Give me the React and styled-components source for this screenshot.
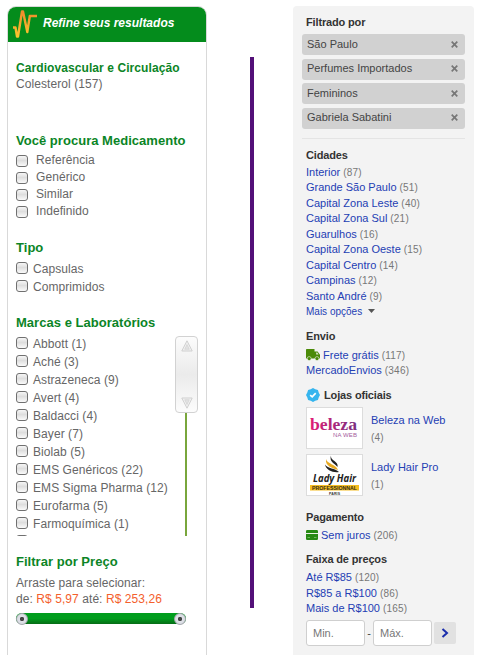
import React from "react";
import styled, { createGlobalStyle } from "styled-components";

const GlobalStyle = createGlobalStyle`
  * { box-sizing: border-box; }
  html, body { margin: 0; height: 655px; overflow: hidden; background: #fff; }
  body { font-family: "Liberation Sans", Arial, sans-serif; font-size: 12px; color: #666; }
  h2, h3, ul, p { margin: 0; padding: 0; list-style: none; }
  svg { display: block; flex: none; }
`;

const Page = styled.main`
  display: grid;
  grid-template-columns: 200px 4px 182px;
  column-gap: 43px;
  width: 478px;
  height: 655px;
  padding: 6px 0 0 7px;
  overflow: hidden;
`;

const RefinePanel = styled.aside`
  height: 670px;
  border: 1px solid #d9d9d9;
  border-radius: 9px 9px 0 0;
  overflow: hidden;
  letter-spacing: 0.07px;
`;

const RefineHeader = styled.h2`
  display: flex;
  align-items: flex-start;
  height: 35px;
  padding: 2px 0 0 4px;
  gap: 5px;
  background: #048c1c;
  color: #fff;
  font: italic bold 12px/28px "Liberation Sans", Arial, sans-serif;
  letter-spacing: 0;
`;

const RefineBody = styled.div`
  padding: 18px 8px 0;
`;

const GreenTitle = styled.h3`
  margin-top: ${(p) => p.$top || 0}px;
  height: ${(p) => (p.$small ? 16 : 17)}px;
  color: #0b8526;
  font-size: ${(p) => (p.$small ? 12 : 13)}px;
  line-height: ${(p) => (p.$small ? 16 : 17)}px;
  letter-spacing: ${(p) => (p.$small ? 0.08 : 0.03)}px;
  white-space: nowrap;
`;

const Line = styled.p`
  height: 16px;
  line-height: 16px;
  white-space: nowrap;
`;

const PriceSummary = styled.div`
  margin-top: 5px;
`;

const Price = styled.span`
  color: #f4602c;
`;

const OptionList = styled.ul`
  margin-top: ${(p) => p.$top}px;
`;

const Option = styled.li`
  display: flex;
  align-items: flex-start;
  gap: ${(p) => (p.$wide ? 8 : 5)}px;
  height: ${(p) => (p.$wide ? 17 : 18)}px;
  line-height: ${(p) => (p.$wide ? 17 : 18)}px;
  white-space: nowrap;
`;

const Box = styled.span`
  flex: none;
  width: 12px;
  height: 12px;
  margin-top: ${(p) => (p.$wide ? 3 : 2)}px;
  border: 1px solid #707070;
  border-radius: 3px;
  background: linear-gradient(#f6f6f6, #dedede 45%, #fafafa);
`;

const BrandArea = styled.div`
  display: flex;
  justify-content: space-between;
  width: 182px;
  height: 201px;
  margin-top: 4px;
  overflow: hidden;
`;

const Scroller = styled.div`
  display: flex;
  flex-direction: column;
  align-items: center;
  width: 23px;
  padding-top: 1px;
`;

const Thumb = styled.div`
  display: flex;
  flex-direction: column;
  align-items: center;
  justify-content: space-between;
  flex: none;
  width: 23px;
  height: 77px;
  padding: 3px 0;
  border: 1px solid #d2d2d2;
  border-radius: 4px;
  background: linear-gradient(#fcfcfc, #ebebeb 50%, #fcfcfc);
`;

const Track = styled.div`
  width: 2px;
  flex: 1;
  margin-right: 1px;
  background: #79a63c;
`;

const Slider = styled.div`
  display: flex;
  justify-content: space-between;
  align-items: center;
  width: 170px;
  height: 11px;
  margin-top: 6px;
  border-radius: 6px;
  background: linear-gradient(#009d1d, #009d1d 50%, #066c16);
`;

const Handle = styled.span`
  width: 12px;
  height: 12px;
  border: 1px solid #a5a8ae;
  border-radius: 50%;
  background: radial-gradient(circle, #444 0 1.8px, #dfe1e8 2.5px, #d2d5dd);
`;

const Divider = styled.div`
  width: 4px;
  height: 551px;
  margin-top: 51px;
  background: #531078;
`;

const FilterPanel = styled.aside`
  height: 670px;
  margin-left: -4px;
  width: 181px;
  border-radius: 4px 4px 0 0;
  background: #f3f3f3;
  font-size: 11px;
  padding: 0 9px;
`;

const Title = styled.h3`
  display: flex;
  align-items: center;
  gap: 4px;
  margin-top: ${(p) => p.$top}px;
  height: 16px;
  padding-left: 4px;
  color: #333;
  font-size: 11px;
  line-height: 16px;
  letter-spacing: -0.15px;
`;

const Chips = styled.ul`
  display: grid;
  grid-auto-rows: 21px;
  row-gap: 3.6px;
  margin-top: 4px;
`;

const Chip = styled.li`
  display: flex;
  align-items: center;
  justify-content: space-between;
  padding: 0 7px 1px 5px;
  border-radius: 3px;
  background: #d1d1d1;
  color: #444;
  line-height: 19px;
`;

const Rule = styled.div`
  height: 1px;
  margin-top: 9px;
  background: #e4e4e4;
`;

const Links = styled.ul`
  margin-top: ${(p) => p.$top}px;
  padding-left: 4px;
`;

const LinkRow = styled.li`
  display: flex;
  align-items: center;
  gap: ${(p) => (p.$small ? 6 : 3)}px;
  height: 15.5px;
  color: #2440b4;
  white-space: nowrap;
  font-size: ${(p) => (p.$small ? 10 : 11)}px;
`;

const Count = styled.span`
  padding-top: 1px;
  color: #777;
  font-size: 10px;
  letter-spacing: 0.2px;
`;

const Store = styled.li`
  display: flex;
  gap: 8px;
  height: 42px;
  margin-bottom: 5px;
`;

const Logo = styled.div`
  width: 57px;
  height: 42px;
  border: 1px solid #dcdcdc;
  background: #fff;
`;

const StoreText = styled.div`
  padding-top: 5px;
  color: #2440b4;
  line-height: 17px;
  white-space: nowrap;
`;

const RangeForm = styled.div`
  display: flex;
  align-items: center;
  height: 26px;
  margin-top: 4px;
  padding-left: 4px;
`;

const Field = styled.div`
  width: 59px;
  height: 26px;
  padding-left: 6px;
  border: 1px solid #cfcfcf;
  border-radius: 3px;
  background: #fff;
  color: #777;
  line-height: 24px;
`;

const Dash = styled.span`
  width: 8px;
  text-align: center;
  color: #444;
`;

const Go = styled.div`
  display: flex;
  align-items: center;
  justify-content: center;
  width: 22px;
  height: 22px;
  margin-left: 2px;
  border-radius: 2px;
  background: #e1e1e1;
`;

const types = ["Capsulas", "Comprimidos"];
const medicines = ["Referência", "Genérico", "Similar", "Indefinido"];
const brands = [
  "Abbott (1)", "Aché (3)", "Astrazeneca (9)", "Avert (4)", "Baldacci (4)", "Bayer (7)",
  "Biolab (5)", "EMS Genéricos (22)", "EMS Sigma Pharma (12)", "Eurofarma (5)",
  "Farmoquímica (1)", "",
];
const chips = ["São Paulo", "Perfumes Importados", "Femininos", "Gabriela Sabatini"];
const cities = [
  ["Interior", 87], ["Grande São Paulo", 51], ["Capital Zona Leste", 40],
  ["Capital Zona Sul", 21], ["Guarulhos", 16], ["Capital Zona Oeste", 15],
  ["Capital Centro", 14], ["Campinas", 12], ["Santo André", 9],
];
const prices = [["Até R$85", 120], ["R$85 a R$100", 86], ["Mais de R$100", 165]];

const Options = ({ items, wide, top }) => (
  <OptionList $top={top}>
    {items.map((name) => (
      <Option key={name} $wide={wide}><Box $wide={wide} />{name}</Option>
    ))}
  </OptionList>
);

const CountedLink = ({ name, count, children }) => (
  <LinkRow>{children}{name} <Count>({count})</Count></LinkRow>
);

const Pulse = () => (
  <svg width="26" height="30" viewBox="0 0 26 30" fill="none">
    <defs>
      <linearGradient id="pulse" x1="0" y1="0" x2="0" y2="1">
        <stop offset="0" stopColor="#f08a2c" /><stop offset="1" stopColor="#fbc62e" />
      </linearGradient>
    </defs>
    <path d="M1 18.5H3.5L5 27.5H6L10 2.5H11L15.3 23L17.8 7H25" stroke="url(#pulse)" strokeWidth="2.4" strokeLinejoin="round" />
  </svg>
);

const Arrow = ({ down }) => (
  <svg width="12" height="12" viewBox="0 0 12 12" fill="#f2f2f2" stroke="#cfcfcf">
    <g transform={down ? "rotate(180 6 6)" : undefined}>
      <path d="M6 .8L11.2 11H.8Z" /><path d="M6 4.5L8.3 9.3H3.7Z" fill="#e2e2e2" strokeWidth=".6" />
    </g>
  </svg>
);

const Close = () => (
  <svg width="7" height="7" viewBox="0 0 7 7" stroke="#777" strokeWidth="1.7">
    <path d="M.7 .7L6.3 6.3M6.3 .7L.7 6.3" />
  </svg>
);

const Truck = () => (
  <svg width="14" height="12" viewBox="0 0 14 12" fill="#4b8b08">
    <path d="M0 .8Q0 0 .8 0H8.5V9.5H0ZM8.5 2.5H11.6L14 5.7V9.5H8.5Z" />
    <path d="M10.2 3.6H11.2L12.6 5.5H10.2Z" fill="#dfead0" />
    <circle cx="3.2" cy="9.6" r="2" stroke="#f3f3f3" strokeWidth=".6" />
    <circle cx="11" cy="9.6" r="2" stroke="#f3f3f3" strokeWidth=".6" />
  </svg>
);

const Badge = () => (
  <svg width="14" height="14" viewBox="0 0 14 14">
    <path d="M7 0L9.3 1.2L11.9 2.1L12.8 4.7L14 7L12.8 9.3L11.9 11.9L9.3 12.8L7 14L4.7 12.8L2.1 11.9L1.2 9.3L0 7L1.2 4.7L2.1 2.1L4.7 1.2Z" fill="#36b5ee" />
    <path d="M4.2 7.1L6.2 8.9L9.7 5.2" fill="none" stroke="#fff" strokeWidth="1.7" />
  </svg>
);

const Card = () => (
  <svg width="12" height="10" viewBox="0 0 12 10">
    <rect width="12" height="10" rx="1.2" fill="#278a13" />
    <path d="M0 3.5H12" stroke="#eaf3e4" strokeWidth="1" />
    <path d="M1.5 7.5H4M8 7.5H10.5" stroke="#6fb45e" />
  </svg>
);

const BelezaLogo = () => (
  <svg width="55" height="40" viewBox="0 0 55 40">
    <defs>
      <linearGradient id="beleza" x1="0" x2="1">
        <stop offset="0" stopColor="#e01d75" /><stop offset="1" stopColor="#793080" />
      </linearGradient>
    </defs>
    <text x="3" y="22" fill="url(#beleza)" fontFamily="Liberation Serif" fontWeight="bold" fontSize="16" textLength="47" lengthAdjust="spacingAndGlyphs">beleza</text>
    <text x="26" y="29" fill="#a55c9d" fontFamily="Liberation Sans" fontSize="6" textLength="24">NA WEB</text>
  </svg>
);

const LadyLogo = () => (
  <svg width="55" height="40" viewBox="0 0 55 40">
    <path d="M24 .5C23 6 32 6 30.5 12C27 8 22 6.5 24 .5Z" fill="#222" />
    <path d="M19 4C20 9 29 9 31 15C25 13 18 11 19 4Z" fill="#e8a920" />
    <path d="M18 9.5C21 14 28 13 32 17C26 18 19 15 18 9.5Z" fill="#222" />
    <text x="6" y="27" fill="#222" fontFamily="Open Sans" fontStyle="italic" fontWeight="bold" fontSize="10" textLength="43" lengthAdjust="spacingAndGlyphs">Lady Hair</text>
    <rect x="3" y="30" width="49" height="5.5" fill="#f5bd22" />
    <text x="5" y="34.5" fill="#332b18" fontFamily="Liberation Sans" fontWeight="bold" fontSize="4.5" textLength="45" lengthAdjust="spacingAndGlyphs">PROFESSIONNAL</text>
    <text x="22" y="39.8" fill="#333" fontFamily="Liberation Sans" fontWeight="bold" fontSize="3.5" textLength="11">PARIS</text>
  </svg>
);

export default function App() {
  return (
    <Page>
      <GlobalStyle />
      <RefinePanel>
        <RefineHeader><Pulse />Refine seus resultados</RefineHeader>
        <RefineBody>
          <GreenTitle $small>Cardiovascular e Circulação</GreenTitle>
          <Line>Colesterol (157)</Line>
          <GreenTitle $top={40}>Você procura Medicamento</GreenTitle>
          <Options items={medicines} wide top={3} />
          <GreenTitle $top={19}>Tipo</GreenTitle>
          <Options items={types} top={4} />
          <GreenTitle $top={18}>Marcas e Laboratórios</GreenTitle>
          <BrandArea>
            <Options items={brands} top={0} />
            <Scroller>
              <Thumb><Arrow /><Arrow down /></Thumb>
              <Track />
            </Scroller>
          </BrandArea>
          <GreenTitle $top={17}>Filtrar por Preço</GreenTitle>
          <PriceSummary>
            <Line>Arraste para selecionar:</Line>
            <Line>de: <Price>R$ 5,97</Price> até: <Price>R$ 253,26</Price></Line>
          </PriceSummary>
          <Slider><Handle /><Handle /></Slider>
        </RefineBody>
      </RefinePanel>
      <Divider />
      <FilterPanel>
        <Title $top={8}>Filtrado por</Title>
        <Chips>{chips.map((name) => <Chip key={name}>{name}<Close /></Chip>)}</Chips>
        <Rule />
        <Title $top={8}>Cidades</Title>
        <Links $top={1}>
          {cities.map(([name, count]) => <CountedLink key={name} name={name} count={count} />)}
          <LinkRow $small>Mais opções
            <svg width="7" height="4" viewBox="0 0 7 4"><path d="M0 0H7L3.5 4Z" fill="#555" /></svg>
          </LinkRow>
        </Links>
        <Title $top={9}>Envio</Title>
        <Links $top={3}>
          <CountedLink name="Frete grátis" count={117}><Truck /></CountedLink>
          <CountedLink name="MercadoEnvios" count={346} />
        </Links>
        <Title $top={9}><Badge />Lojas oficiais</Title>
        <Links $top={4}>
          <Store><Logo><BelezaLogo /></Logo><StoreText>Beleza na Web<br /><Count>(4)</Count></StoreText></Store>
          <Store><Logo><LadyLogo /></Logo><StoreText>Lady Hair Pro<br /><Count>(1)</Count></StoreText></Store>
        </Links>
        <Title $top={13}>Pagamento</Title>
        <Links $top={2}><CountedLink name="Sem juros" count={206}><Card /></CountedLink></Links>
        <Title $top={9}>Faixa de preços</Title>
        <Links $top={2}>
          {prices.map(([name, count]) => <CountedLink key={name} name={name} count={count} />)}
        </Links>
        <RangeForm><Field>Min.</Field><Dash>-</Dash><Field>Máx.</Field>
          <Go><svg width="8" height="10" viewBox="0 0 8 10" fill="none" stroke="#1b2eac" strokeWidth="2"><path d="M1.5 1L6 5L1.5 9" /></svg></Go>
        </RangeForm>
      </FilterPanel>
    </Page>
  );
}
